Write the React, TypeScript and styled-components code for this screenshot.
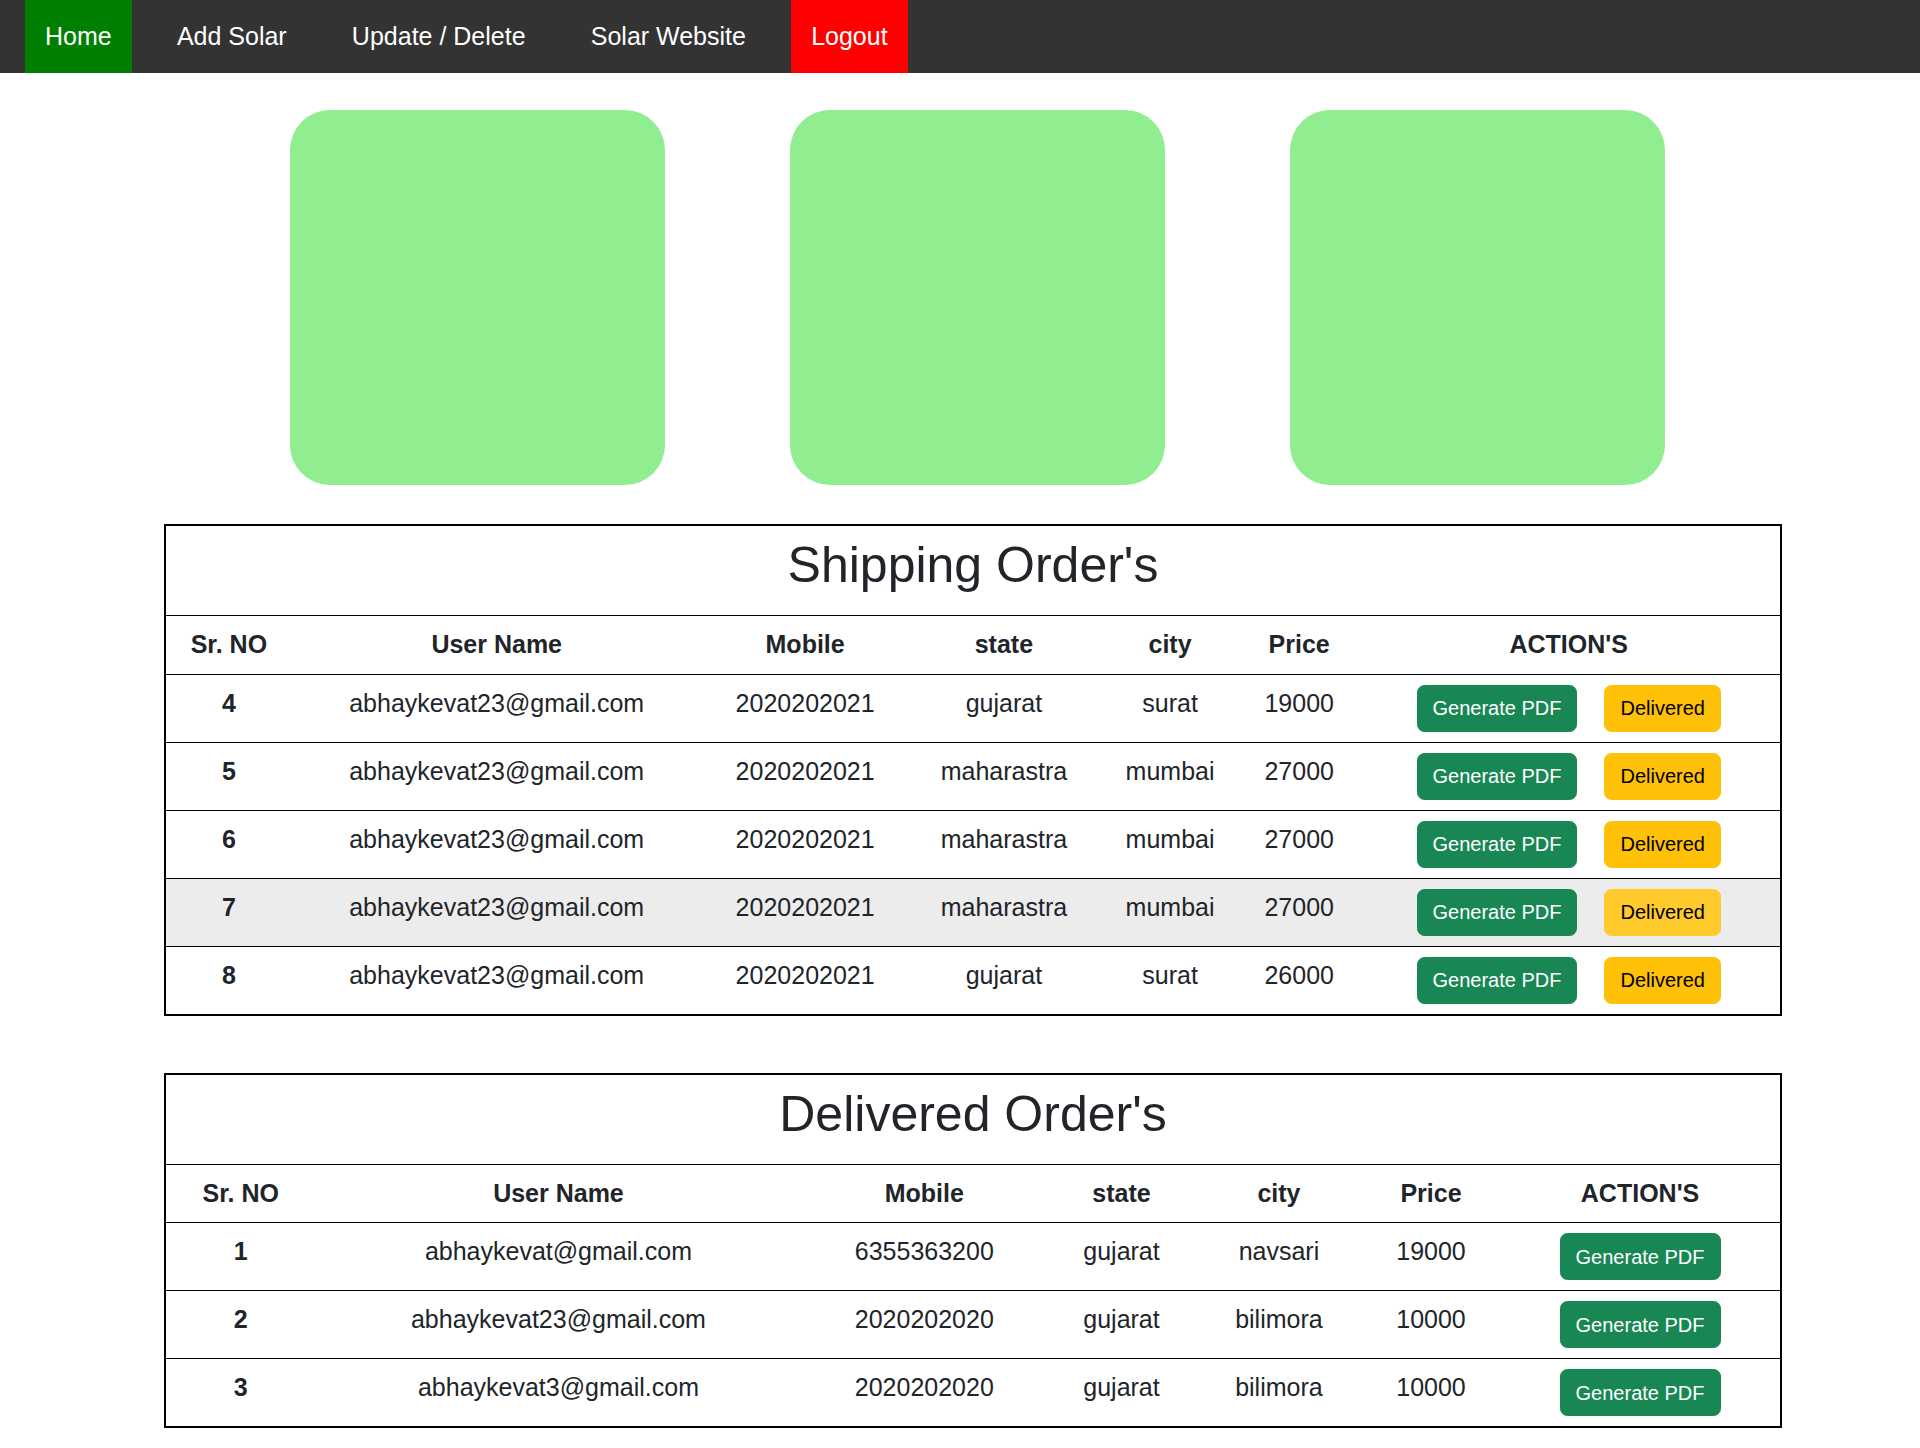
import React from "react";
import styled, { createGlobalStyle } from "styled-components";

interface Order {
  id: number;
  email: string;
  mobile: string;
  state: string;
  city: string;
  price: number;
  hover?: boolean;
}

const shipping: Order[] = [
  { id: 4, email: "abhaykevat23@gmail.com", mobile: "2020202021", state: "gujarat", city: "surat", price: 19000 },
  { id: 5, email: "abhaykevat23@gmail.com", mobile: "2020202021", state: "maharastra", city: "mumbai", price: 27000 },
  { id: 6, email: "abhaykevat23@gmail.com", mobile: "2020202021", state: "maharastra", city: "mumbai", price: 27000 },
  { id: 7, email: "abhaykevat23@gmail.com", mobile: "2020202021", state: "maharastra", city: "mumbai", price: 27000, hover: true },
  { id: 8, email: "abhaykevat23@gmail.com", mobile: "2020202021", state: "gujarat", city: "surat", price: 26000 },
];

const delivered: Order[] = [
  { id: 1, email: "abhaykevat@gmail.com", mobile: "6355363200", state: "gujarat", city: "navsari", price: 19000 },
  { id: 2, email: "abhaykevat23@gmail.com", mobile: "2020202020", state: "gujarat", city: "bilimora", price: 10000 },
  { id: 3, email: "abhaykevat3@gmail.com", mobile: "2020202020", state: "gujarat", city: "bilimora", price: 10000 },
];

const navItems = [
  { label: "Home", bg: "#008000" },
  { label: "Add Solar" },
  { label: "Update / Delete" },
  { label: "Solar Website" },
  { label: "Logout", bg: "#ff0000" },
];

const columns = ["Sr. NO", "User Name", "Mobile", "state", "city", "Price", "ACTION'S"];

const OrdersTable = ({
  title,
  orders,
  withDeliver,
  gap,
}: {
  title: string;
  orders: Order[];
  withDeliver?: boolean;
  gap: number;
}) => (
  <Table $top={gap}>
    <thead>
      <tr>
        <TitleCell colSpan={7}>{title}</TitleCell>
      </tr>
      <tr>
        {columns.map((c) => (
          <HeadCell key={c}>{c}</HeadCell>
        ))}
      </tr>
    </thead>
    <tbody>
      {orders.map((o) => (
        <Row key={o.id} $hover={o.hover}>
          <NumCell>{o.id}</NumCell>
          <Cell>{o.email}</Cell>
          <Cell>{o.mobile}</Cell>
          <Cell>{o.state}</Cell>
          <Cell>{o.city}</Cell>
          <Cell>{o.price}</Cell>
          <Cell>
            <Button $variant="success">Generate PDF</Button>
            {withDeliver && (
              <DeliverButton $variant={o.hover ? "warningHover" : "warning"}>
                Delivered
              </DeliverButton>
            )}
          </Cell>
        </Row>
      ))}
    </tbody>
  </Table>
);

const App = () => {
  return (
    <>
      <GlobalStyle />
      <NavBar>
        {navItems.map((n) => (
          <NavLink key={n.label} href="#" $bg={n.bg}>
            {n.label}
          </NavLink>
        ))}
      </NavBar>
      <CardRow>
        <Card />
        <Card />
        <Card />
      </CardRow>
      <OrdersTable title="Shipping Order's" orders={shipping} withDeliver gap={39} />
      <OrdersTable title="Delivered Order's" orders={delivered} gap={57} />
      <Footer />
    </>
  );
};

const GlobalStyle = createGlobalStyle`
  body {
    margin: 0;
    font-family: "Liberation Sans", Arial, sans-serif;
    color: #212529;
    background: #fff;
  }
`;

const NavBar = styled("nav")`
  display: flex;
  height: 73px;
  gap: 25.2px;
  padding-left: 25px;
  background: #333;
`;

const NavLink = styled("a")<{ $bg?: string }>`
  display: flex;
  align-items: center;
  padding: 0 20px;
  font-size: 25px;
  color: #fff;
  text-decoration: none;
  background: ${(p) => p.$bg || "transparent"};
`;

const CardRow = styled("section")`
  display: flex;
  gap: 125px;
  padding: 37px 0 0 290px;
`;

const Card = styled("div")`
  width: 375px;
  height: 375px;
  border-radius: 40px;
  background: #90ee90;
`;

const Table = styled("table")<{ $top: number }>`
  width: 1618px;
  margin: ${(p) => p.$top}px 0 0 164px;
  border-collapse: collapse;
  border: 2px solid #000;
  font-size: 25px;
  line-height: 1.5;
  text-align: center;
  vertical-align: top;
`;

const TitleCell = styled("th")`
  padding: 9px 0 20px;
  font-size: 50px;
  font-weight: 400;
  line-height: 60px;
  border-bottom: 1px solid #000;
`;

const HeadCell = styled("th")`
  padding: 10px;
  font-weight: 700;
  border-bottom: 1px solid #000;
  white-space: nowrap;
`;

const Row = styled("tr")<{ $hover?: boolean }>`
  background: ${(p) => (p.$hover ? "#ececec" : "transparent")};
`;

const Cell = styled("td")`
  padding: 10px;
  vertical-align: top;
  border-bottom: 1px solid #000;
  white-space: nowrap;
`;

const NumCell = styled(Cell)`
  font-weight: 700;
`;

const variants = {
  success: { bg: "#198754", fg: "#fff" },
  warning: { bg: "#ffc107", fg: "#000" },
  warningHover: { bg: "#ffca2c", fg: "#000" },
};

const Button = styled("button")<{ $variant: keyof typeof variants }>`
  display: inline-block;
  padding: 7.5px 15px;
  font-family: inherit;
  font-size: 20px;
  line-height: 1.5;
  border-radius: 7.5px;
  border: 1px solid ${(p) => variants[p.$variant].bg};
  background: ${(p) => variants[p.$variant].bg};
  color: ${(p) => variants[p.$variant].fg};
  cursor: pointer;
`;

const DeliverButton = styled(Button)`
  margin-left: 27px;
`;

const Footer = styled("div")`
  height: 20px;
`;

export default App;
